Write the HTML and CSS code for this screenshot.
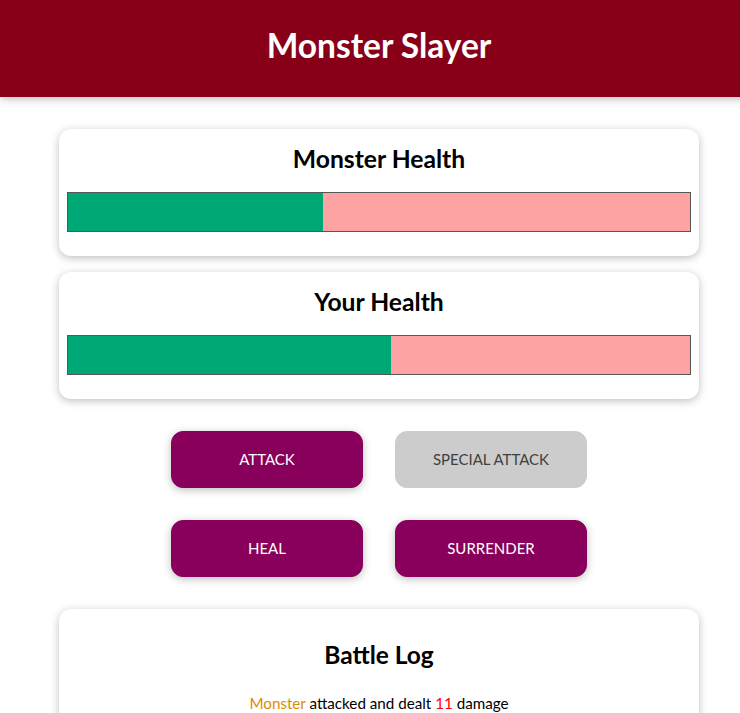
FILE: index.html
```html
<!DOCTYPE html>
<html lang="en">
<head>
<meta charset="UTF-8">
<title>Monster Slayer</title>
<link rel="stylesheet" href="styles.css">
</head>
<body>
<div class="page">
<header class="header">
  <h1 class="title">Monster Slayer</h1>
</header>
<div class="game">
  <section class="container">
    <h2 class="card-title">Monster Health</h2>
    <div class="healthbar">
      <div class="healthbar__value" style="width: 41%"></div>
    </div>
  </section>
  <section class="container">
    <h2 class="card-title">Your Health</h2>
    <div class="healthbar">
      <div class="healthbar__value" style="width: 52%"></div>
    </div>
  </section>
  <section class="controls">
    <button class="btn">ATTACK</button>
    <button class="btn" disabled>SPECIAL ATTACK</button>
    <button class="btn">HEAL</button>
    <button class="btn">SURRENDER</button>
  </section>
  <section class="container log">
    <h2 class="log-title">Battle Log</h2>
    <ul class="log-list">
      <li class="log-item"><span class="log--monster">Monster</span> attacked and dealt <span class="log--damage">11</span> damage</li>
    </ul>
  </section>
</div>
</div>
</body>
</html>
```
FILE: styles.css
```css
* { box-sizing: border-box; }
html { font-family: "Lato", "Open Sans", sans-serif; overflow: hidden; }
body { margin: 0; background: #fff; color: #000; }

.page { width: 758px; }

.header {
  margin: 0 0 32px 0;
  text-align: center;
  padding: 0 8px 6px;
  background-color: #880017;
  color: #fff;
  box-shadow: 0 2px 8px rgba(0, 0, 0, 0.26);
  height: 97px;
  display: flex;
  align-items: center;
  justify-content: center;
}
.title {
  margin: 0;
  font-size: 33.5px;
  line-height: 37px;
  font-weight: 700;
}

.game { width: 640px; margin: 0 auto; }

.container {
  text-align: center;
  padding: 8px;
  margin: 16px auto;
  box-shadow: 0 2px 8px rgba(0, 0, 0, 0.26);
  border-radius: 12px;
  background: #fff;
}
.game > .container:first-child { margin-top: 0; }

.card-title {
  margin: 4px;
  font-size: 24.7px;
  line-height: 35px;
  font-weight: 700;
}

.healthbar {
  width: 100%;
  height: 40px;
  border: 1px solid #575757;
  margin: 16px 0;
  background: #fda3a3;
}
.healthbar__value { background-color: #00a876; height: 100%; }

.controls {
  display: flex;
  flex-wrap: wrap;
  justify-content: center;
}
.btn {
  font: inherit;
  font-size: 15px;
  line-height: 23px;
  border: 1px solid #88005b;
  background-color: #88005b;
  color: #fff;
  padding: 16px 8px;
  border-radius: 12px;
  margin: 16px;
  width: 192px;
  box-shadow: 0 2px 8px rgba(0, 0, 0, 0.26);
}
.btn:disabled {
  background-color: #ccc;
  border-color: #ccc;
  box-shadow: none;
  color: #3f3f3f;
}

.log-title {
  margin: 20px 0;
  font-size: 24.5px;
  line-height: 35px;
  font-weight: 700;
}
.log-list { list-style: none; margin: 0; padding: 0; }
.log-item { margin: 8px 0; font-size: 15.2px; line-height: 23px; }
.log--monster { color: #da8d00; }
.log--damage { color: #ff0000; }
```
